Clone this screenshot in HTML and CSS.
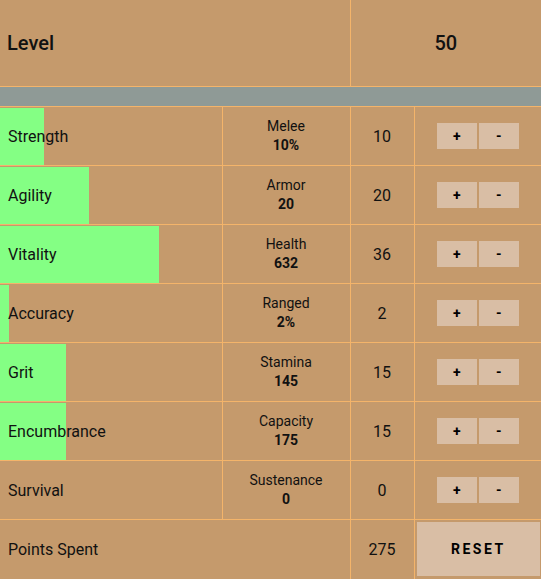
FILE: index.html
```html
<!DOCTYPE html>
<html lang="en">
<head>
  <meta charset="UTF-8">
  <title>Attributes</title>
  <link rel="stylesheet" href="styles.css">
</head>
<body>
  <table class="stats">
    <colgroup>
      <col class="col-name">
      <col class="col-effect">
      <col class="col-points">
      <col class="col-actions">
    </colgroup>
    <tr class="level-row">
      <td colspan="2" class="level-label">Level</td>
      <td colspan="2" class="level-value">50</td>
    </tr>
    <tr class="divider-row">
      <td colspan="4"></td>
    </tr>
    <tr class="stat-row">
      <td class="name"><div class="bar" style="width: 20%"></div><span>Strength</span></td>
      <td class="effect">Melee<b>10%</b></td>
      <td class="points">10</td>
      <td class="actions"><button>+</button><button>-</button></td>
    </tr>
    <tr class="stat-row">
      <td class="name"><div class="bar" style="width: 40%"></div><span>Agility</span></td>
      <td class="effect">Armor<b>20</b></td>
      <td class="points">20</td>
      <td class="actions"><button>+</button><button>-</button></td>
    </tr>
    <tr class="stat-row">
      <td class="name"><div class="bar" style="width: 72%"></div><span>Vitality</span></td>
      <td class="effect">Health<b>632</b></td>
      <td class="points">36</td>
      <td class="actions"><button>+</button><button>-</button></td>
    </tr>
    <tr class="stat-row">
      <td class="name"><div class="bar" style="width: 4%"></div><span>Accuracy</span></td>
      <td class="effect">Ranged<b>2%</b></td>
      <td class="points">2</td>
      <td class="actions"><button>+</button><button>-</button></td>
    </tr>
    <tr class="stat-row">
      <td class="name"><div class="bar" style="width: 30%"></div><span>Grit</span></td>
      <td class="effect">Stamina<b>145</b></td>
      <td class="points">15</td>
      <td class="actions"><button>+</button><button>-</button></td>
    </tr>
    <tr class="stat-row">
      <td class="name"><div class="bar" style="width: 30%"></div><span>Encumbrance</span></td>
      <td class="effect">Capacity<b>175</b></td>
      <td class="points">15</td>
      <td class="actions"><button>+</button><button>-</button></td>
    </tr>
    <tr class="stat-row">
      <td class="name"><div class="bar" style="width: 0%"></div><span>Survival</span></td>
      <td class="effect">Sustenance<b>0</b></td>
      <td class="points">0</td>
      <td class="actions"><button>+</button><button>-</button></td>
    </tr>
    <tr class="total-row">
      <td colspan="2" class="name"><span>Points Spent</span></td>
      <td class="points">275</td>
      <td class="reset-cell"><button class="reset">RESET</button></td>
    </tr>
  </table>
</body>
</html>
```

FILE: styles.css
```css
body {
  margin: 0;
  background-color: #c59a6c;
  color: #111;
  font-family: Roboto, "Liberation Sans", Arial, sans-serif;
}

.stats {
  width: 541px;
  border-collapse: collapse;
  table-layout: fixed;
  background-color: #c59a6c;
}

.col-name {
  width: 222px;
}

.col-effect {
  width: 128px;
}

.col-points {
  width: 64px;
}

.col-actions {
  width: 127px;
}

.stats td {
  padding: 0;
  border-bottom: 1px solid #f4b46a;
  border-right: 1px solid #f4b46a;
}

.stats td:last-child {
  border-right: none;
}

.level-row td {
  height: 86px;
  font-size: 20px;
  font-weight: 500;
}

.level-label {
  padding-left: 7px !important;
}

.level-value {
  text-align: center;
}

.divider-row td {
  height: 19px;
  background-color: #8f9a96;
}

.stat-row td {
  height: 58px;
}

.total-row td {
  height: 57px;
}

.name {
  position: relative;
  font-size: 16px;
}

.name span {
  position: relative;
  padding-left: 8px;
}

.bar {
  position: absolute;
  top: 1px;
  bottom: 0;
  left: 0;
  background-color: #84ff84;
}

.effect {
  text-align: center;
  font-size: 14px;
  line-height: 19px;
}

.effect b {
  display: block;
  font-weight: 700;
}

.points {
  text-align: center;
  font-size: 16px;
}

.actions {
  text-align: center;
}

.actions button {
  width: 40px;
  height: 26px;
  margin: 0 1px;
  padding: 0;
  border: none;
  background-color: #d9bea5;
  color: #000;
  font-family: Roboto, "Liberation Sans", Arial, sans-serif;
  font-size: 14px;
  font-weight: 700;
  vertical-align: middle;
  cursor: pointer;
}

.reset-cell {
  vertical-align: top;
  padding: 2px 1px 0 2px !important;
}

.reset {
  display: block;
  width: 100%;
  height: 54px;
  border: none;
  background-color: #d9bea5;
  color: #000;
  font-family: Roboto, "Liberation Sans", Arial, sans-serif;
  font-size: 14px;
  font-weight: 700;
  letter-spacing: 2.5px;
  cursor: pointer;
}
```
